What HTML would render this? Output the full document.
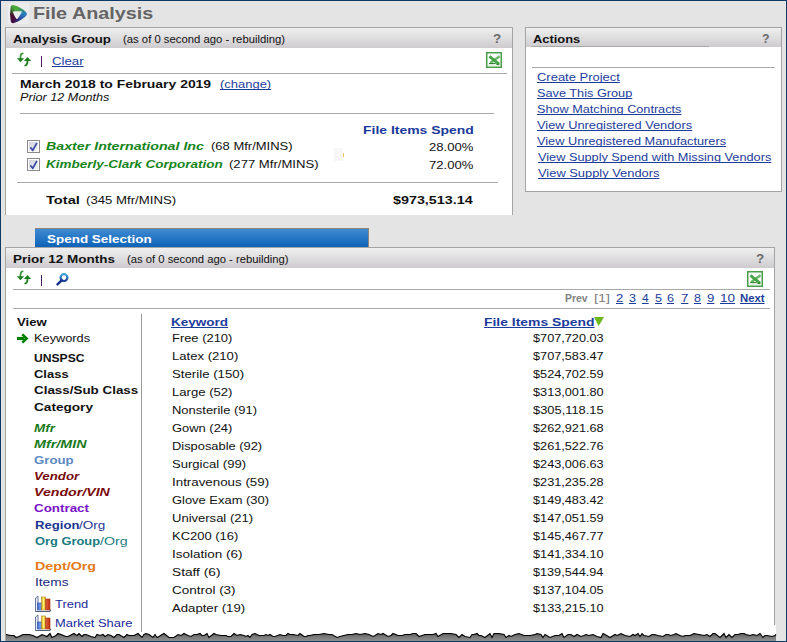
<!DOCTYPE html>
<html><head><meta charset="utf-8"><style>
html,body{margin:0;padding:0}
body{width:787px;height:642px;position:relative;overflow:hidden;background:#e4e4e4;font-family:"Liberation Sans",sans-serif}
.t{position:absolute;white-space:nowrap;transform-origin:0 0;text-decoration-skip-ink:none}
.a{position:absolute}
.panel{position:absolute;background:#fff;border:1px solid #a4a4a4;box-sizing:border-box}
.hdr{position:absolute;left:0;right:0;top:0;height:20px;background:linear-gradient(#f0f0f0,#e6e5e6 30%,#cdcbce)}
.hr{position:absolute;height:1px;background:#a8a8a8}
.sep{position:absolute;width:1px;background:#4a1a60}

</style></head><body>
<!-- logo -->
<div class="a" style="left:8px;top:3px;width:21px;height:21px;background:#ececec"></div>
<div class="a" style="left:8px;top:3px;width:21px;height:21px;background:conic-gradient(from 0deg at 9.5px 11px,#4aa83a 0deg,#3a9a60 40deg,#2a7cc0 90deg,#2a5aa8 140deg,#2a2a78 175deg,#480a40 215deg,#4a1030 260deg,#3a6a30 300deg,#48a83a 330deg,#4aa83a 360deg);clip-path:path(evenodd,'M2.6,4 Q3.2,1.6 5.8,2.2 Q13,4 18.2,9.2 Q19.8,11 18.2,12.8 Q13,18 6,20 Q3.4,20.8 2.8,18.4 Q1.2,11 2.6,4 Z M5,9.2 Q5,8.2 6,8.2 L13,8.3 Q14.2,8.4 13.6,9.4 Q11.5,13 9.6,15.8 Q9,16.6 8.4,15.8 Q6,12.5 5,9.2 Z')"></div>
<!-- Analysis group panel -->
<div class="panel" style="left:5px;top:27px;width:508px;height:188px;border-bottom:none">
  <div class="hdr"></div>
</div>
<div class="hr" style="left:12px;top:73px;width:495px"></div>
<div class="hr" style="left:20px;top:113px;width:474px"></div>
<div class="hr" style="left:17px;top:182px;width:481px"></div>
<div class="sep" style="left:41px;top:56px;height:11px"></div>

<!-- Actions panel -->
<div class="panel" style="left:525px;top:27px;width:257px;height:165px">
  <div class="hdr" style="height:19px"></div>
</div>
<div class="hr" style="left:532px;top:67px;width:243px"></div>
<div class="hr" style="left:531px;top:46px;width:178px;background:#a9a9a9"></div>

<!-- spend selection tab -->
<div class="a" style="left:35px;top:228px;width:334px;height:19px;box-sizing:border-box;border-top:1px solid #8c8478;border-right:1px solid #8c8478;background:linear-gradient(#3f8ad2,#0d63b8)"></div>

<!-- prior 12 months panel -->
<div class="panel" style="left:5px;top:247px;width:770px;height:400px">
  <div class="hdr"></div>
</div>
<div class="hr" style="left:13px;top:289px;width:757px"></div>
<div class="hr" style="left:13px;top:308px;width:757px"></div>
<div class="sep" style="left:41px;top:275px;height:11px"></div>
<div class="hr" style="left:141px;top:314px;width:1px;height:318px;background:#9a9a9a"></div>
<!-- artifact -->
<div class="a" style="left:334px;top:148px;width:9px;height:13px;background:#f7f7f7"></div>
<div class="a" style="left:343px;top:153px;width:1px;height:4px;background:#f5c060"></div>
<!-- refresh icons -->
<svg class="a" style="left:14px;top:50px" width="20" height="20" viewBox="0 0 20 20">
<path d="M8.6,3.3 C7,3.5 6.3,5.5 6.5,8.6" fill="none" stroke="#3a963a" stroke-width="1.8" stroke-linecap="round"/>
<path d="M2.8,8.2 L10.2,8.2 L6.5,12.2 Z" fill="#1e7e1e"/>
<path d="M13.5,10.5 C13.6,13.4 12.8,15 11.2,15.5" fill="none" stroke="#1e7e1e" stroke-width="1.8" stroke-linecap="round"/>
<path d="M9.8,11.1 L17.2,11.1 L13.5,7 Z" fill="#1e7e1e"/>
</svg>
<svg class="a" style="left:14px;top:268px" width="20" height="20" viewBox="0 0 20 20">
<path d="M8.6,3.3 C7,3.5 6.3,5.5 6.5,8.6" fill="none" stroke="#3a963a" stroke-width="1.8" stroke-linecap="round"/>
<path d="M2.8,8.2 L10.2,8.2 L6.5,12.2 Z" fill="#1e7e1e"/>
<path d="M13.5,10.5 C13.6,13.4 12.8,15 11.2,15.5" fill="none" stroke="#1e7e1e" stroke-width="1.8" stroke-linecap="round"/>
<path d="M9.8,11.1 L17.2,11.1 L13.5,7 Z" fill="#1e7e1e"/>
</svg>
<!-- excel icons -->
<svg class="a" style="left:486px;top:52px" width="16" height="16" viewBox="0 0 16 16">
<rect x="0.75" y="0.75" width="14.5" height="14.5" fill="#fff" stroke="#4a9e4a" stroke-width="1.5"/>
<path d="M2,13.2 L14,13.2" stroke="#d8ecd8" stroke-width="1"/>
<path d="M13.6,4.2 L4.2,11" stroke="#66b866" stroke-width="2.4"/>
<path d="M3.4,4.4 L13,12.2" stroke="#46a446" stroke-width="2.8"/>
<path d="M3,11.6 L9.6,11.6 M10.5,12.4 L13.5,12.2" stroke="#1e7a1e" stroke-width="1"/>
</svg>
<svg class="a" style="left:747px;top:271px" width="16" height="16" viewBox="0 0 16 16">
<rect x="0.75" y="0.75" width="14.5" height="14.5" fill="#fff" stroke="#4a9e4a" stroke-width="1.5"/>
<path d="M2,13.2 L14,13.2" stroke="#d8ecd8" stroke-width="1"/>
<path d="M13.6,4.2 L4.2,11" stroke="#66b866" stroke-width="2.4"/>
<path d="M3.4,4.4 L13,12.2" stroke="#46a446" stroke-width="2.8"/>
<path d="M3,11.6 L9.6,11.6 M10.5,12.4 L13.5,12.2" stroke="#1e7a1e" stroke-width="1"/>
</svg>
<!-- checkboxes -->
<svg width="0" height="0" style="position:absolute"><defs><linearGradient id="cbg" x1="0" y1="0" x2="1" y2="1"><stop offset="0" stop-color="#cfd3db"/><stop offset="1" stop-color="#f4f5f8"/></linearGradient></defs></svg>
<svg class="a" style="left:27px;top:140px" width="13" height="13" viewBox="0 0 13 13">
<rect x="0.5" y="0.5" width="12" height="12" fill="#fff" stroke="#8a8a8a"/>
<rect x="2" y="2" width="9" height="9" fill="url(#cbg)"/>
<path d="M3.4,7.4 L5.8,10.2 L9.9,2.9" fill="none" stroke="#3a4aa4" stroke-width="1.7"/>
</svg>
<svg class="a" style="left:27px;top:158px" width="13" height="13" viewBox="0 0 13 13">
<rect x="0.5" y="0.5" width="12" height="12" fill="#fff" stroke="#8a8a8a"/>
<rect x="2" y="2" width="9" height="9" fill="url(#cbg)"/>
<path d="M3.4,7.4 L5.8,10.2 L9.9,2.9" fill="none" stroke="#3a4aa4" stroke-width="1.7"/>
</svg>
<!-- magnifier -->
<svg class="a" style="left:52px;top:268px" width="20" height="20" viewBox="0 0 20 20">
<defs><linearGradient id="mg" x1="0" y1="0" x2="0" y2="1"><stop offset="0" stop-color="#3aa8e0"/><stop offset="1" stop-color="#1a3a9a"/></linearGradient></defs>
<circle cx="12" cy="9.6" r="3.4" fill="none" stroke="url(#mg)" stroke-width="2.2"/>
<path d="M9.6,12.4 L5.5,16.4" stroke="#14308a" stroke-width="2.4" stroke-linecap="round"/>
</svg>
<!-- green arrow -->
<svg class="a" style="left:14px;top:330px" width="18" height="18" viewBox="0 0 18 18">
<path d="M3,8.5 L10.5,8.5" stroke="#008000" stroke-width="3.2"/>
<path d="M8.3,4.4 L12.6,8.5 L8.3,12.6" fill="none" stroke="#008000" stroke-width="2.6"/>
</svg>
<!-- sort triangle -->
<svg class="a" style="left:594px;top:317px" width="10" height="10" viewBox="0 0 10 10">
<path d="M0,0 L10,0 L4.6,9 Z" fill="#6cb81c"/>
</svg>
<!-- chart icons -->
<svg class="a" style="left:34px;top:595px" width="18" height="18" viewBox="0 0 18 18">
<defs>
<linearGradient id="cb" x1="0" x2="1"><stop offset="0" stop-color="#3a6ad8"/><stop offset="1" stop-color="#8ab0f0"/></linearGradient>
<linearGradient id="cy" x1="0" x2="1"><stop offset="0" stop-color="#e0b000"/><stop offset="0.5" stop-color="#fff080"/><stop offset="1" stop-color="#e0a000"/></linearGradient>
<linearGradient id="cr" x1="0" x2="1"><stop offset="0" stop-color="#e06040"/><stop offset="1" stop-color="#c03010"/></linearGradient>
</defs>
<path d="M1.5,16.5 L1.5,3 L4,1 L4,14.5" fill="#e8eef8" stroke="#6a7a9a" stroke-width="1"/>
<path d="M1.5,16.5 L15.5,16.5 L17,15" fill="none" stroke="#4a5a7a" stroke-width="1.2"/>
<rect x="3.6" y="8" width="3.6" height="7" fill="url(#cb)" stroke="#2a4aa0" stroke-width="0.6"/>
<rect x="7.6" y="2" width="4" height="13" fill="url(#cy)" stroke="#a08020" stroke-width="0.6"/>
<rect x="11.8" y="4" width="4.2" height="11" fill="url(#cr)" stroke="#a03010" stroke-width="0.6"/>
</svg>
<svg class="a" style="left:34px;top:614px" width="18" height="18" viewBox="0 0 18 18">
<path d="M1.5,16.5 L1.5,3 L4,1 L4,14.5" fill="#e8eef8" stroke="#6a7a9a" stroke-width="1"/>
<path d="M1.5,16.5 L15.5,16.5 L17,15" fill="none" stroke="#4a5a7a" stroke-width="1.2"/>
<rect x="3.6" y="8" width="3.6" height="7" fill="url(#cb)" stroke="#2a4aa0" stroke-width="0.6"/>
<rect x="7.6" y="2" width="4" height="13" fill="url(#cy)" stroke="#a08020" stroke-width="0.6"/>
<rect x="11.8" y="4" width="4.2" height="11" fill="url(#cr)" stroke="#a03010" stroke-width="0.6"/>
</svg>
<div class="a" style="left:774px;top:625px;width:2px;height:10px;background:#fff"></div>
<svg class="a" style="left:0;top:0" width="787" height="642" viewBox="0 0 787 642">
<defs><linearGradient id="tg" x1="0" y1="0" x2="0" y2="1"><stop offset="0" stop-color="#5a5a5a"/><stop offset="0.5" stop-color="#7c7c7c"/><stop offset="1" stop-color="#8e8e8e"/></linearGradient></defs>
<polygon points="6.0,634.5 11.0,635.5 14.0,635.5 16.0,637.5 19.0,636.5 23.0,634.5 27.0,634.5 29.0,634.5 33.0,635.5 35.0,636.5 37.0,637.5 42.0,634.5 47.0,636.5 50.0,633.5 52.0,637.5 56.0,635.5 58.0,633.5 61.0,634.5 66.0,636.5 68.0,636.5 70.0,635.5 74.0,633.5 77.0,635.5 79.0,633.5 82.0,636.5 84.0,634.5 86.0,634.5 91.0,636.5 95.0,637.5 97.0,634.5 100.0,635.5 103.0,634.5 105.0,636.5 108.0,634.5 111.0,635.5 114.0,637.5 117.0,634.5 119.0,634.5 124.0,637.5 127.0,634.5 129.0,635.5 134.0,635.5 138.0,633.5 142.0,637.5 144.0,634.5 146.0,633.5 149.0,634.5 153.0,637.5 155.0,634.5 157.0,637.5 159.0,636.5 162.0,634.5 164.0,633.5 169.0,637.5 172.0,637.5 174.0,637.5 178.0,634.5 181.0,635.5 184.0,633.5 186.0,634.5 188.0,635.5 191.0,636.5 194.0,634.5 197.0,634.5 200.0,633.5 202.0,635.5 204.0,635.5 207.0,633.5 209.0,637.5 214.0,633.5 216.0,634.5 221.0,635.5 226.0,635.5 228.0,636.5 231.0,636.5 234.0,633.5 237.0,635.5 240.0,634.5 244.0,635.5 246.0,636.5 248.0,635.5 250.0,637.5 252.0,634.5 255.0,633.5 259.0,635.5 264.0,635.5 266.0,634.5 268.0,635.5 270.0,634.5 273.0,636.5 275.0,636.5 280.0,634.5 283.0,635.5 286.0,635.5 288.0,633.5 290.0,634.5 293.0,634.5 298.0,635.5 300.0,633.5 304.0,636.5 306.0,636.5 308.0,635.5 310.0,635.5 314.0,634.5 319.0,634.5 324.0,633.5 329.0,634.5 332.0,634.5 337.0,637.5 340.0,636.5 344.0,635.5 348.0,634.5 352.0,634.5 356.0,633.5 360.0,634.5 365.0,633.5 369.0,634.5 373.0,636.5 375.0,635.5 378.0,633.5 381.0,634.5 383.0,633.5 388.0,636.5 391.0,635.5 393.0,633.5 398.0,635.5 402.0,635.5 405.0,634.5 407.0,634.5 410.0,634.5 413.0,633.5 416.0,633.5 419.0,636.5 422.0,635.5 425.0,634.5 430.0,634.5 433.0,634.5 436.0,633.5 438.0,636.5 443.0,633.5 447.0,633.5 451.0,633.5 456.0,634.5 459.0,637.5 462.0,634.5 465.0,636.5 470.0,637.5 472.0,634.5 474.0,634.5 477.0,633.5 479.0,635.5 481.0,635.5 485.0,637.5 490.0,633.5 492.0,637.5 494.0,633.5 496.0,633.5 499.0,633.5 504.0,634.5 506.0,637.5 509.0,635.5 511.0,636.5 515.0,634.5 519.0,633.5 524.0,635.5 527.0,635.5 530.0,635.5 535.0,634.5 537.0,633.5 541.0,634.5 543.0,637.5 545.0,634.5 550.0,637.5 555.0,635.5 557.0,635.5 559.0,635.5 562.0,633.5 564.0,637.5 568.0,634.5 571.0,634.5 574.0,636.5 577.0,634.5 581.0,636.5 584.0,635.5 586.0,634.5 589.0,635.5 593.0,634.5 597.0,636.5 601.0,637.5 603.0,633.5 605.0,634.5 610.0,637.5 615.0,634.5 617.0,635.5 621.0,633.5 625.0,635.5 630.0,636.5 633.0,634.5 635.0,635.5 638.0,633.5 640.0,636.5 642.0,633.5 644.0,635.5 649.0,636.5 652.0,634.5 654.0,634.5 658.0,635.5 663.0,636.5 666.0,634.5 668.0,634.5 671.0,635.5 674.0,634.5 676.0,633.5 680.0,635.5 683.0,636.5 685.0,635.5 690.0,635.5 694.0,633.5 699.0,634.5 704.0,635.5 707.0,634.5 710.0,636.5 713.0,633.5 715.0,633.5 720.0,637.5 724.0,633.5 726.0,637.5 729.0,634.5 732.0,637.5 735.0,634.5 738.0,634.5 741.0,633.5 744.0,633.5 746.0,634.5 750.0,635.5 753.0,634.5 757.0,635.5 760.0,633.5 763.0,637.5 765.0,635.5 767.0,635.5 772.0,636.5 775.0,635.5 776.0,634.5 776,641 6,641" fill="url(#tg)"/>
<polyline points="6.0,634.5 11.0,635.5 14.0,635.5 16.0,637.5 19.0,636.5 23.0,634.5 27.0,634.5 29.0,634.5 33.0,635.5 35.0,636.5 37.0,637.5 42.0,634.5 47.0,636.5 50.0,633.5 52.0,637.5 56.0,635.5 58.0,633.5 61.0,634.5 66.0,636.5 68.0,636.5 70.0,635.5 74.0,633.5 77.0,635.5 79.0,633.5 82.0,636.5 84.0,634.5 86.0,634.5 91.0,636.5 95.0,637.5 97.0,634.5 100.0,635.5 103.0,634.5 105.0,636.5 108.0,634.5 111.0,635.5 114.0,637.5 117.0,634.5 119.0,634.5 124.0,637.5 127.0,634.5 129.0,635.5 134.0,635.5 138.0,633.5 142.0,637.5 144.0,634.5 146.0,633.5 149.0,634.5 153.0,637.5 155.0,634.5 157.0,637.5 159.0,636.5 162.0,634.5 164.0,633.5 169.0,637.5 172.0,637.5 174.0,637.5 178.0,634.5 181.0,635.5 184.0,633.5 186.0,634.5 188.0,635.5 191.0,636.5 194.0,634.5 197.0,634.5 200.0,633.5 202.0,635.5 204.0,635.5 207.0,633.5 209.0,637.5 214.0,633.5 216.0,634.5 221.0,635.5 226.0,635.5 228.0,636.5 231.0,636.5 234.0,633.5 237.0,635.5 240.0,634.5 244.0,635.5 246.0,636.5 248.0,635.5 250.0,637.5 252.0,634.5 255.0,633.5 259.0,635.5 264.0,635.5 266.0,634.5 268.0,635.5 270.0,634.5 273.0,636.5 275.0,636.5 280.0,634.5 283.0,635.5 286.0,635.5 288.0,633.5 290.0,634.5 293.0,634.5 298.0,635.5 300.0,633.5 304.0,636.5 306.0,636.5 308.0,635.5 310.0,635.5 314.0,634.5 319.0,634.5 324.0,633.5 329.0,634.5 332.0,634.5 337.0,637.5 340.0,636.5 344.0,635.5 348.0,634.5 352.0,634.5 356.0,633.5 360.0,634.5 365.0,633.5 369.0,634.5 373.0,636.5 375.0,635.5 378.0,633.5 381.0,634.5 383.0,633.5 388.0,636.5 391.0,635.5 393.0,633.5 398.0,635.5 402.0,635.5 405.0,634.5 407.0,634.5 410.0,634.5 413.0,633.5 416.0,633.5 419.0,636.5 422.0,635.5 425.0,634.5 430.0,634.5 433.0,634.5 436.0,633.5 438.0,636.5 443.0,633.5 447.0,633.5 451.0,633.5 456.0,634.5 459.0,637.5 462.0,634.5 465.0,636.5 470.0,637.5 472.0,634.5 474.0,634.5 477.0,633.5 479.0,635.5 481.0,635.5 485.0,637.5 490.0,633.5 492.0,637.5 494.0,633.5 496.0,633.5 499.0,633.5 504.0,634.5 506.0,637.5 509.0,635.5 511.0,636.5 515.0,634.5 519.0,633.5 524.0,635.5 527.0,635.5 530.0,635.5 535.0,634.5 537.0,633.5 541.0,634.5 543.0,637.5 545.0,634.5 550.0,637.5 555.0,635.5 557.0,635.5 559.0,635.5 562.0,633.5 564.0,637.5 568.0,634.5 571.0,634.5 574.0,636.5 577.0,634.5 581.0,636.5 584.0,635.5 586.0,634.5 589.0,635.5 593.0,634.5 597.0,636.5 601.0,637.5 603.0,633.5 605.0,634.5 610.0,637.5 615.0,634.5 617.0,635.5 621.0,633.5 625.0,635.5 630.0,636.5 633.0,634.5 635.0,635.5 638.0,633.5 640.0,636.5 642.0,633.5 644.0,635.5 649.0,636.5 652.0,634.5 654.0,634.5 658.0,635.5 663.0,636.5 666.0,634.5 668.0,634.5 671.0,635.5 674.0,634.5 676.0,633.5 680.0,635.5 683.0,636.5 685.0,635.5 690.0,635.5 694.0,633.5 699.0,634.5 704.0,635.5 707.0,634.5 710.0,636.5 713.0,633.5 715.0,633.5 720.0,637.5 724.0,633.5 726.0,637.5 729.0,634.5 732.0,637.5 735.0,634.5 738.0,634.5 741.0,633.5 744.0,633.5 746.0,634.5 750.0,635.5 753.0,634.5 757.0,635.5 760.0,633.5 763.0,637.5 765.0,635.5 767.0,635.5 772.0,636.5 775.0,635.5 776.0,634.5" fill="none" stroke="#000" stroke-width="1.1"/>
</svg>


<div class="t" id="title" style="left:32.54px;top:5px;font-size:17px;line-height:17px;color:#646464;font-weight:bold;transform:scaleX(1.1654);">File Analysis</div>
<div class="t" id="ag_h" style="left:12.70px;top:34px;font-size:11px;line-height:11px;color:#111;font-weight:bold;transform:scaleX(1.2050);">Analysis Group</div>
<div class="t" id="ag_as" style="left:122.65px;top:35px;font-size:10px;line-height:10px;color:#111;transform:scaleX(1.1303);">(as of 0 second ago - rebuilding)</div>
<div class="t" id="ag_q" style="left:492.94px;top:33px;font-size:12px;line-height:12px;color:#6a6a6a;font-weight:bold;transform:scaleX(1.1200);">?</div>
<div class="t" id="clear" style="left:51.90px;top:56px;font-size:11px;line-height:11px;color:#1c3c9c;text-decoration:underline;transform:scaleX(1.2039);">Clear</div>
<div class="t" id="march" style="left:19.55px;top:79px;font-size:11px;line-height:11px;color:#111;font-weight:bold;transform:scaleX(1.2654);">March 2018 to February 2019</div>
<div class="t" id="change" style="left:220.42px;top:79px;font-size:11px;line-height:11px;color:#1c3c9c;text-decoration:underline;transform:scaleX(1.1786);">(change)</div>
<div class="t" id="prior" style="left:20.11px;top:92px;font-size:11px;line-height:11px;color:#111;font-style:italic;transform:scaleX(1.1506);">Prior 12 Months</div>
<div class="t" id="fis" style="left:362.55px;top:125px;font-size:11px;line-height:11px;color:#1a3a9a;font-weight:bold;transform:scaleX(1.2674);">File Items Spend</div>
<div class="t" id="bax" style="left:45.88px;top:141px;font-size:11px;line-height:11px;color:#15851a;font-weight:bold;font-style:italic;transform:scaleX(1.2920);">Baxter International Inc</div>
<div class="t" id="bax2" style="left:210.51px;top:141px;font-size:11px;line-height:11px;color:#111;transform:scaleX(1.1808);">(68 Mfr/MINS)</div>
<div class="t" id="bax3" style="left:428.51px;top:142px;font-size:11px;line-height:11px;color:#111;transform:scaleX(1.1890);">28.00%</div>
<div class="t" id="kim" style="left:45.89px;top:159px;font-size:11px;line-height:11px;color:#15851a;font-weight:bold;font-style:italic;transform:scaleX(1.2251);">Kimberly-Clark Corporation</div>
<div class="t" id="kim2" style="left:229.11px;top:159px;font-size:11px;line-height:11px;color:#111;transform:scaleX(1.1905);">(277 Mfr/MINS)</div>
<div class="t" id="kim3" style="left:428.51px;top:160px;font-size:11px;line-height:11px;color:#111;transform:scaleX(1.1890);">72.00%</div>
<div class="t" id="tot" style="left:46.37px;top:195px;font-size:11px;line-height:11px;color:#111;font-weight:bold;transform:scaleX(1.3306);">Total</div>
<div class="t" id="tot2" style="left:85.70px;top:195px;font-size:11px;line-height:11px;color:#111;transform:scaleX(1.1986);">(345 Mfr/MINS)</div>
<div class="t" id="tot3" style="left:392.77px;top:195px;font-size:11px;line-height:11px;color:#111;font-weight:bold;transform:scaleX(1.3016);">$973,513.14</div>
<div class="t" id="act_h" style="left:533.11px;top:34px;font-size:11px;line-height:11px;color:#111;font-weight:bold;transform:scaleX(1.1723);">Actions</div>
<div class="t" id="act_q" style="left:762.09px;top:33px;font-size:12px;line-height:12px;color:#6a6a6a;font-weight:bold;transform:scaleX(1.0240);">?</div>
<div class="t" id="act0" style="left:536.91px;top:72px;font-size:11px;line-height:11px;color:#1c3c9c;text-decoration:underline;transform:scaleX(1.1785);">Create Project</div>
<div class="t" id="act1" style="left:536.92px;top:88px;font-size:11px;line-height:11px;color:#1c3c9c;text-decoration:underline;transform:scaleX(1.1571);">Save This Group</div>
<div class="t" id="act2" style="left:536.92px;top:104px;font-size:11px;line-height:11px;color:#1c3c9c;text-decoration:underline;transform:scaleX(1.1518);">Show Matching Contracts</div>
<div class="t" id="act3" style="left:537.21px;top:120px;font-size:11px;line-height:11px;color:#1c3c9c;text-decoration:underline;transform:scaleX(1.1660);">View Unregistered Vendors</div>
<div class="t" id="act4" style="left:537.21px;top:136px;font-size:11px;line-height:11px;color:#1c3c9c;text-decoration:underline;transform:scaleX(1.1594);">View Unregistered Manufacturers</div>
<div class="t" id="act5" style="left:537.91px;top:152px;font-size:11px;line-height:11px;color:#1c3c9c;text-decoration:underline;transform:scaleX(1.1572);">View Supply Spend with Missing Vendors</div>
<div class="t" id="act6" style="left:537.91px;top:168px;font-size:11px;line-height:11px;color:#1c3c9c;text-decoration:underline;transform:scaleX(1.1709);">View Supply Vendors</div>
<div class="t" id="ss" style="left:46.59px;top:234px;font-size:11px;line-height:11px;color:#fff;font-weight:bold;transform:scaleX(1.2236);">Spend Selection</div>
<div class="t" id="p12" style="left:13.28px;top:254px;font-size:11px;line-height:11px;color:#111;font-weight:bold;transform:scaleX(1.2268);">Prior 12 Months</div>
<div class="t" id="p12as" style="left:127.15px;top:255px;font-size:10px;line-height:10px;color:#111;transform:scaleX(1.1268);">(as of 0 second ago - rebuilding)</div>
<div class="t" id="p12q" style="left:756.44px;top:253px;font-size:12px;line-height:12px;color:#6a6a6a;font-weight:bold;transform:scaleX(1.1200);">?</div>
<div class="t" id="prev" style="left:565.19px;top:293px;font-size:11px;line-height:11px;color:#808080;font-weight:bold;transform:scaleX(0.9435);">Prev</div>
<div class="t" id="pg1" style="left:593.71px;top:293px;font-size:11px;line-height:11px;color:#808080;transform:scaleX(1.3209);">[1]</div>
<div class="t" id="pg2" style="left:616.00px;top:293px;font-size:11px;line-height:11px;color:#1c3c9c;text-decoration:underline;transform:scaleX(1.2000);">2</div>
<div class="t" id="pg3" style="left:628.83px;top:293px;font-size:11px;line-height:11px;color:#1c3c9c;text-decoration:underline;transform:scaleX(1.1429);">3</div>
<div class="t" id="pg4" style="left:641.93px;top:293px;font-size:11px;line-height:11px;color:#1c3c9c;text-decoration:underline;transform:scaleX(1.0909);">4</div>
<div class="t" id="pg5" style="left:654.93px;top:293px;font-size:11px;line-height:11px;color:#1c3c9c;text-decoration:underline;transform:scaleX(1.1429);">5</div>
<div class="t" id="pg6" style="left:667.43px;top:293px;font-size:11px;line-height:11px;color:#1c3c9c;text-decoration:underline;transform:scaleX(1.1429);">6</div>
<div class="t" id="pg7" style="left:680.90px;top:293px;font-size:11px;line-height:11px;color:#1c3c9c;text-decoration:underline;transform:scaleX(1.2000);">7</div>
<div class="t" id="pg8" style="left:693.93px;top:293px;font-size:11px;line-height:11px;color:#1c3c9c;text-decoration:underline;transform:scaleX(1.1429);">8</div>
<div class="t" id="pg9" style="left:706.90px;top:293px;font-size:11px;line-height:11px;color:#1c3c9c;text-decoration:underline;transform:scaleX(1.2000);">9</div>
<div class="t" id="pg10" style="left:719.58px;top:293px;font-size:11px;line-height:11px;color:#1c3c9c;text-decoration:underline;transform:scaleX(1.2273);">10</div>
<div class="t" id="next" style="left:739.53px;top:293px;font-size:11px;line-height:11px;color:#1c3c9c;font-weight:bold;text-decoration:underline;transform:scaleX(1.0304);">Next</div>
<div class="t" id="view" style="left:17.10px;top:317px;font-size:11px;line-height:11px;color:#111;font-weight:bold;transform:scaleX(1.1959);">View</div>
<div class="t" id="kw" style="left:34.24px;top:333px;font-size:11px;line-height:11px;color:#111;transform:scaleX(1.1617);">Keywords</div>
<div class="t" id="unspsc" style="left:33.57px;top:353px;font-size:11px;line-height:11px;color:#111;font-weight:bold;transform:scaleX(1.1017);">UNSPSC</div>
<div class="t" id="class" style="left:33.81px;top:369px;font-size:11px;line-height:11px;color:#111;font-weight:bold;transform:scaleX(1.1789);">Class</div>
<div class="t" id="csc" style="left:33.79px;top:385px;font-size:11px;line-height:11px;color:#111;font-weight:bold;transform:scaleX(1.2177);">Class/Sub Class</div>
<div class="t" id="cat" style="left:33.78px;top:402px;font-size:11px;line-height:11px;color:#111;font-weight:bold;transform:scaleX(1.2362);">Category</div>
<div class="t" id="mfr" style="left:34.09px;top:423px;font-size:11px;line-height:11px;color:#1a7a1a;font-weight:bold;font-style:italic;transform:scaleX(1.2232);">Mfr</div>
<div class="t" id="mfrmin" style="left:34.07px;top:439px;font-size:11px;line-height:11px;color:#1a7a1a;font-weight:bold;font-style:italic;transform:scaleX(1.3019);">Mfr/MIN</div>
<div class="t" id="group" style="left:33.80px;top:455px;font-size:11px;line-height:11px;color:#5a88c0;font-weight:bold;transform:scaleX(1.2000);">Group</div>
<div class="t" id="vendor" style="left:33.99px;top:471px;font-size:11px;line-height:11px;color:#7a0a0a;font-weight:bold;font-style:italic;transform:scaleX(1.2054);">Vendor</div>
<div class="t" id="vvin" style="left:33.91px;top:487px;font-size:11px;line-height:11px;color:#7a0a0a;font-weight:bold;font-style:italic;transform:scaleX(1.2879);">Vendor/VIN</div>
<div class="t" id="contract" style="left:33.79px;top:503px;font-size:11px;line-height:11px;color:#7a12c8;font-weight:bold;transform:scaleX(1.2157);">Contract</div>
<div class="t" id="region" style="left:35.10px;top:520px;font-size:11px;line-height:11px;color:#1a3590;font-weight:bold;transform:scaleX(1.1944);">Region</div>
<div class="t" id="region2" style="left:78.70px;top:520px;font-size:11px;line-height:11px;color:#1a3590;transform:scaleX(1.2289);">/Org</div>
<div class="t" id="orgg" style="left:35.42px;top:536px;font-size:11px;line-height:11px;color:#1a7a80;font-weight:bold;transform:scaleX(1.1689);">Org Group</div>
<div class="t" id="orgg2" style="left:100.00px;top:536px;font-size:11px;line-height:11px;color:#1a7a80;transform:scaleX(1.2867);">/Org</div>
<div class="t" id="dept" style="left:35.03px;top:561px;font-size:11px;line-height:11px;color:#e47a1a;font-weight:bold;transform:scaleX(1.2967);">Dept/Org</div>
<div class="t" id="items" style="left:34.75px;top:577px;font-size:11px;line-height:11px;color:#1a2a7a;transform:scaleX(1.2471);">Items</div>
<div class="t" id="trend" style="left:55.11px;top:599px;font-size:11px;line-height:11px;color:#1a2a9a;transform:scaleX(1.1743);">Trend</div>
<div class="t" id="mkt" style="left:54.73px;top:618px;font-size:11px;line-height:11px;color:#1a2a9a;transform:scaleX(1.1721);">Market Share</div>
<div class="t" id="kwh" style="left:171.38px;top:317px;font-size:11px;line-height:11px;color:#1c3c9c;font-weight:bold;text-decoration:underline;transform:scaleX(1.2289);">Keyword</div>
<div class="t" id="fish" style="left:483.75px;top:317px;font-size:11px;line-height:11px;color:#1c3c9c;font-weight:bold;text-decoration:underline;transform:scaleX(1.2651);">File Items Spend</div>
<div class="t" id="r0" style="left:172.01px;top:333px;font-size:11px;line-height:11px;color:#111;transform:scaleX(1.1741);">Free (210)</div>
<div class="t" id="m0" style="left:533.21px;top:333px;font-size:11px;line-height:11px;color:#111;transform:scaleX(1.1554);">$707,720.03</div>
<div class="t" id="r1" style="left:172.00px;top:351px;font-size:11px;line-height:11px;color:#111;transform:scaleX(1.1908);">Latex (210)</div>
<div class="t" id="m1" style="left:533.21px;top:351px;font-size:11px;line-height:11px;color:#111;transform:scaleX(1.1554);">$707,583.47</div>
<div class="t" id="r2" style="left:172.00px;top:369px;font-size:11px;line-height:11px;color:#111;transform:scaleX(1.2034);">Sterile (150)</div>
<div class="t" id="m2" style="left:533.21px;top:369px;font-size:11px;line-height:11px;color:#111;transform:scaleX(1.1554);">$524,702.59</div>
<div class="t" id="r3" style="left:172.00px;top:387px;font-size:11px;line-height:11px;color:#111;transform:scaleX(1.1919);">Large (52)</div>
<div class="t" id="m3" style="left:533.21px;top:387px;font-size:11px;line-height:11px;color:#111;transform:scaleX(1.1554);">$313,001.80</div>
<div class="t" id="r4" style="left:172.01px;top:405px;font-size:11px;line-height:11px;color:#111;transform:scaleX(1.1789);">Nonsterile (91)</div>
<div class="t" id="m4" style="left:533.21px;top:405px;font-size:11px;line-height:11px;color:#111;transform:scaleX(1.1699);">$305,118.15</div>
<div class="t" id="r5" style="left:172.01px;top:423px;font-size:11px;line-height:11px;color:#111;transform:scaleX(1.1741);">Gown (24)</div>
<div class="t" id="m5" style="left:533.21px;top:423px;font-size:11px;line-height:11px;color:#111;transform:scaleX(1.1554);">$262,921.68</div>
<div class="t" id="r6" style="left:172.02px;top:441px;font-size:11px;line-height:11px;color:#111;transform:scaleX(1.1697);">Disposable (92)</div>
<div class="t" id="m6" style="left:533.21px;top:441px;font-size:11px;line-height:11px;color:#111;transform:scaleX(1.1554);">$261,522.76</div>
<div class="t" id="r7" style="left:172.01px;top:459px;font-size:11px;line-height:11px;color:#111;transform:scaleX(1.1886);">Surgical (99)</div>
<div class="t" id="m7" style="left:533.21px;top:459px;font-size:11px;line-height:11px;color:#111;transform:scaleX(1.1554);">$243,006.63</div>
<div class="t" id="r8" style="left:171.99px;top:477px;font-size:11px;line-height:11px;color:#111;transform:scaleX(1.2127);">Intravenous (59)</div>
<div class="t" id="m8" style="left:533.21px;top:477px;font-size:11px;line-height:11px;color:#111;transform:scaleX(1.1554);">$231,235.28</div>
<div class="t" id="r9" style="left:172.01px;top:495px;font-size:11px;line-height:11px;color:#111;transform:scaleX(1.1755);">Glove Exam (30)</div>
<div class="t" id="m9" style="left:533.21px;top:495px;font-size:11px;line-height:11px;color:#111;transform:scaleX(1.1554);">$149,483.42</div>
<div class="t" id="r10" style="left:172.01px;top:513px;font-size:11px;line-height:11px;color:#111;transform:scaleX(1.1836);">Universal (21)</div>
<div class="t" id="m10" style="left:533.21px;top:513px;font-size:11px;line-height:11px;color:#111;transform:scaleX(1.1554);">$147,051.59</div>
<div class="t" id="r11" style="left:172.01px;top:531px;font-size:11px;line-height:11px;color:#111;transform:scaleX(1.1800);">KC200 (16)</div>
<div class="t" id="m11" style="left:533.21px;top:531px;font-size:11px;line-height:11px;color:#111;transform:scaleX(1.1554);">$145,467.77</div>
<div class="t" id="r12" style="left:171.99px;top:549px;font-size:11px;line-height:11px;color:#111;transform:scaleX(1.2267);">Isolation (6)</div>
<div class="t" id="m12" style="left:533.21px;top:549px;font-size:11px;line-height:11px;color:#111;transform:scaleX(1.1554);">$141,334.10</div>
<div class="t" id="r13" style="left:171.98px;top:567px;font-size:11px;line-height:11px;color:#111;transform:scaleX(1.2450);">Staff (6)</div>
<div class="t" id="m13" style="left:533.21px;top:567px;font-size:11px;line-height:11px;color:#111;transform:scaleX(1.1506);">$139,544.94</div>
<div class="t" id="r14" style="left:171.99px;top:585px;font-size:11px;line-height:11px;color:#111;transform:scaleX(1.2236);">Control (3)</div>
<div class="t" id="m14" style="left:533.21px;top:585px;font-size:11px;line-height:11px;color:#111;transform:scaleX(1.1554);">$137,104.05</div>
<div class="t" id="r15" style="left:172.00px;top:603px;font-size:11px;line-height:11px;color:#111;transform:scaleX(1.1950);">Adapter (19)</div>
<div class="t" id="m15" style="left:533.21px;top:603px;font-size:11px;line-height:11px;color:#111;transform:scaleX(1.1554);">$133,215.10</div>

<div class="a" style="left:0;top:0;width:787px;height:642px;box-sizing:border-box;border:1px solid #0b3a6b"></div>

</body></html>
